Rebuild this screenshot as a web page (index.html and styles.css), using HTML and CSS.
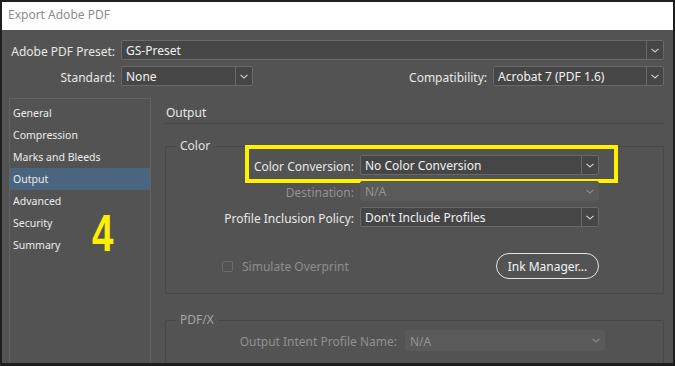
FILE: index.html
```html
<!DOCTYPE html>
<html lang="en">
<head>
    <meta charset="UTF-8">
    <title>Export Adobe PDF</title>
    <link rel="stylesheet" href="styles.css">
</head>
<body>
    <div class="window">
        <div class="titlebar">Export Adobe PDF</div>

        <div class="main">
            <!-- Preset / standard rows -->
            <div class="top-row">
                <label class="top-label">Adobe PDF Preset:</label>
                <div class="select select-wide">
                    <span class="select-value">GS-Preset</span>
                    <span class="select-btn"><svg viewBox="0 0 8 5" class="chev"><path d="M0.5 0.8 L4 4 L7.5 0.8"/></svg></span>
                </div>
            </div>
            <div class="top-row second">
                <label class="top-label">Standard:</label>
                <div class="select select-std">
                    <span class="select-value">None</span>
                    <span class="select-btn"><svg viewBox="0 0 8 5" class="chev"><path d="M0.5 0.8 L4 4 L7.5 0.8"/></svg></span>
                </div>
                <label class="compat-label">Compatibility:</label>
                <div class="select select-compat">
                    <span class="select-value">Acrobat 7 (PDF 1.6)</span>
                    <span class="select-btn"><svg viewBox="0 0 8 5" class="chev"><path d="M0.5 0.8 L4 4 L7.5 0.8"/></svg></span>
                </div>
            </div>

            <div class="content">
                <!-- Sidebar -->
                <div class="sidebar">
                    <div class="side-item">General</div>
                    <div class="side-item">Compression</div>
                    <div class="side-item">Marks and Bleeds</div>
                    <div class="side-item active">Output</div>
                    <div class="side-item">Advanced</div>
                    <div class="side-item">Security</div>
                    <div class="side-item">Summary</div>
                    <div class="step-number">4</div>
                </div>

                <!-- Output pane -->
                <div class="pane">
                    <div class="pane-title">Output</div>

                    <fieldset class="group">
                        <legend>Color</legend>
                        <div class="field-row highlighted">
                            <label>Color Conversion:</label>
                            <div class="select">
                                <span class="select-value">No Color Conversion</span>
                                <span class="select-btn"><svg viewBox="0 0 8 5" class="chev"><path d="M0.5 0.8 L4 4 L7.5 0.8"/></svg></span>
                            </div>
                            <div class="callout"></div>
                        </div>
                        <div class="field-row disabled">
                            <label>Destination:</label>
                            <div class="select off">
                                <span class="select-value">N/A</span>
                                <span class="select-btn"><svg viewBox="0 0 8 5" class="chev"><path d="M0.5 0.8 L4 4 L7.5 0.8"/></svg></span>
                            </div>
                        </div>
                        <div class="field-row">
                            <label>Profile Inclusion Policy:</label>
                            <div class="select">
                                <span class="select-value">Don't Include Profiles</span>
                                <span class="select-btn"><svg viewBox="0 0 8 5" class="chev"><path d="M0.5 0.8 L4 4 L7.5 0.8"/></svg></span>
                            </div>
                        </div>
                        <div class="check-row">
                            <span class="checkbox"></span>
                            <span class="check-text">Simulate Overprint</span>
                            <button class="pill-btn">Ink Manager...</button>
                        </div>
                    </fieldset>

                    <fieldset class="group pdfx">
                        <legend>PDF/X</legend>
                        <div class="field-row disabled intent">
                            <label>Output Intent Profile Name:</label>
                            <div class="select off">
                                <span class="select-value">N/A</span>
                                <span class="select-btn"><svg viewBox="0 0 8 5" class="chev"><path d="M0.5 0.8 L4 4 L7.5 0.8"/></svg></span>
                            </div>
                        </div>
                    </fieldset>
                </div>
            </div>
        </div>
    </div>
</body>
</html>
```

FILE: styles.css
```css
* {
    margin: 0;
    padding: 0;
    box-sizing: border-box;
}

body {
    font-family: 'Noto Sans', 'Open Sans', sans-serif;
    font-size: 12px;
    background: #1e1e1e;
}

.window {
    width: 675px;
    height: 366px;
    border: 2px solid #1e1e1e;
    border-bottom-width: 3px;
    display: flex;
    flex-direction: column;
    overflow: hidden;
}

.titlebar {
    height: 28px;
    line-height: 26px;
    padding-left: 6px;
    background: #fff;
    color: #8c8c8c;
    font-size: 12px;
}

.main {
    flex: 1;
    background: #535353;
    padding: 10px 9px 0 0;
    overflow: hidden;
    color: #e8e8e8;
}

/* top rows */
.top-row {
    display: flex;
    align-items: center;
    height: 20px;
}

.top-row.second {
    margin-top: 6px;
}

.top-label {
    width: 113px;
    text-align: right;
    margin-right: 6px;
    padding-top: 2px;
}

.compat-label {
    margin-left: auto;
    margin-right: 6px;
    padding-top: 2px;
}

.select {
    height: 20px;
    display: flex;
    align-items: center;
    background: #464646;
    border: 1px solid #696969;
    border-radius: 2px;
    color: #f2f2f2;
}

.select-value {
    flex: 1;
    padding-left: 4px;
    padding-top: 1px;
    white-space: nowrap;
    overflow: hidden;
}

.select-btn {
    width: 17px;
    height: 100%;
    border-left: 1px solid #696969;
    display: flex;
    align-items: center;
    justify-content: center;
}

.chev {
    width: 8px;
    height: 5px;
    fill: none;
    stroke: #cfcfcf;
    stroke-width: 1.1;
}

.select-wide {
    flex: 1;
}

.select-std {
    width: 132px;
}

.select-compat {
    width: 171px;
}

.select.off {
    background: #5a5a5a;
    border-color: #5a5a5a;
    color: #939393;
}

.select.off .select-btn {
    border-left: none;
}

.select.off .chev {
    stroke: #8c8c8c;
}

/* content */
.content {
    display: flex;
    margin-top: 12px;
    margin-left: 7px;
}

.sidebar {
    width: 142px;
    height: 290px;
    flex-shrink: 0;
    border: 1px solid #626262;
    padding-top: 3px;
    position: relative;
    font-size: 10.5px;
}

.side-item {
    height: 22px;
    line-height: 22px;
    padding-left: 3px;
    color: #ececec;
}

.side-item.active {
    background: #4b6580;
}

.step-number {
    position: absolute;
    left: 82px;
    top: 108px;
    font-family: 'Liberation Sans Narrow', 'Liberation Sans', sans-serif;
    font-weight: bold;
    font-size: 52px;
    line-height: 52px;
    color: #ffee00;
    transform: scaleX(0.74);
    transform-origin: left top;
}

.pane {
    flex: 1;
    margin-left: 14px;
}

.pane-title {
    padding: 7px 1px 2px;
    line-height: 16px;
    border-bottom: 1px solid #474747;
}

.group {
    border: 1px solid #484848;
    border-radius: 2px;
    margin-top: 14px;
    padding: 1px 0 14px;
}

.group legend {
    margin-left: 10px;
    padding: 0 4px;
    line-height: 16px;
    color: #e0e0e0;
}

.field-row {
    display: grid;
    grid-template-columns: 188px 239px;
    column-gap: 6px;
    align-items: center;
    margin-top: 6px;
    position: relative;
}

.field-row:first-of-type {
    margin-top: 0;
}

.field-row label {
    text-align: right;
    padding-top: 2px;
}

.field-row.disabled label {
    color: #919191;
}

.callout {
    position: absolute;
    left: 79px;
    top: -10px;
    width: 373px;
    height: 38px;
    border: 4px solid #fff200;
}

.check-row {
    display: flex;
    align-items: center;
    width: 433px;
    margin-top: 26px;
    padding-left: 56px;
}

.checkbox {
    width: 11px;
    height: 11px;
    border: 1px solid #6c6c6c;
    border-radius: 2px;
}

.check-text {
    margin-left: 9px;
    color: #8e8e8e;
}

.pill-btn {
    margin-left: auto;
    width: 103px;
    height: 26px;
    border: 1px solid #e6e6e6;
    border-radius: 13px;
    background: transparent;
    color: #f4f4f4;
    font-family: inherit;
    font-size: 12px;
}

.group.pdfx {
    margin-top: 18px;
    padding-top: 2px;
}

.group.pdfx legend {
    color: #a6a6a6;
}

.field-row.intent {
    grid-template-columns: 231px 200px;
    column-gap: 8px;
}

.field-row.intent .select {
    height: 21px;
}
```
